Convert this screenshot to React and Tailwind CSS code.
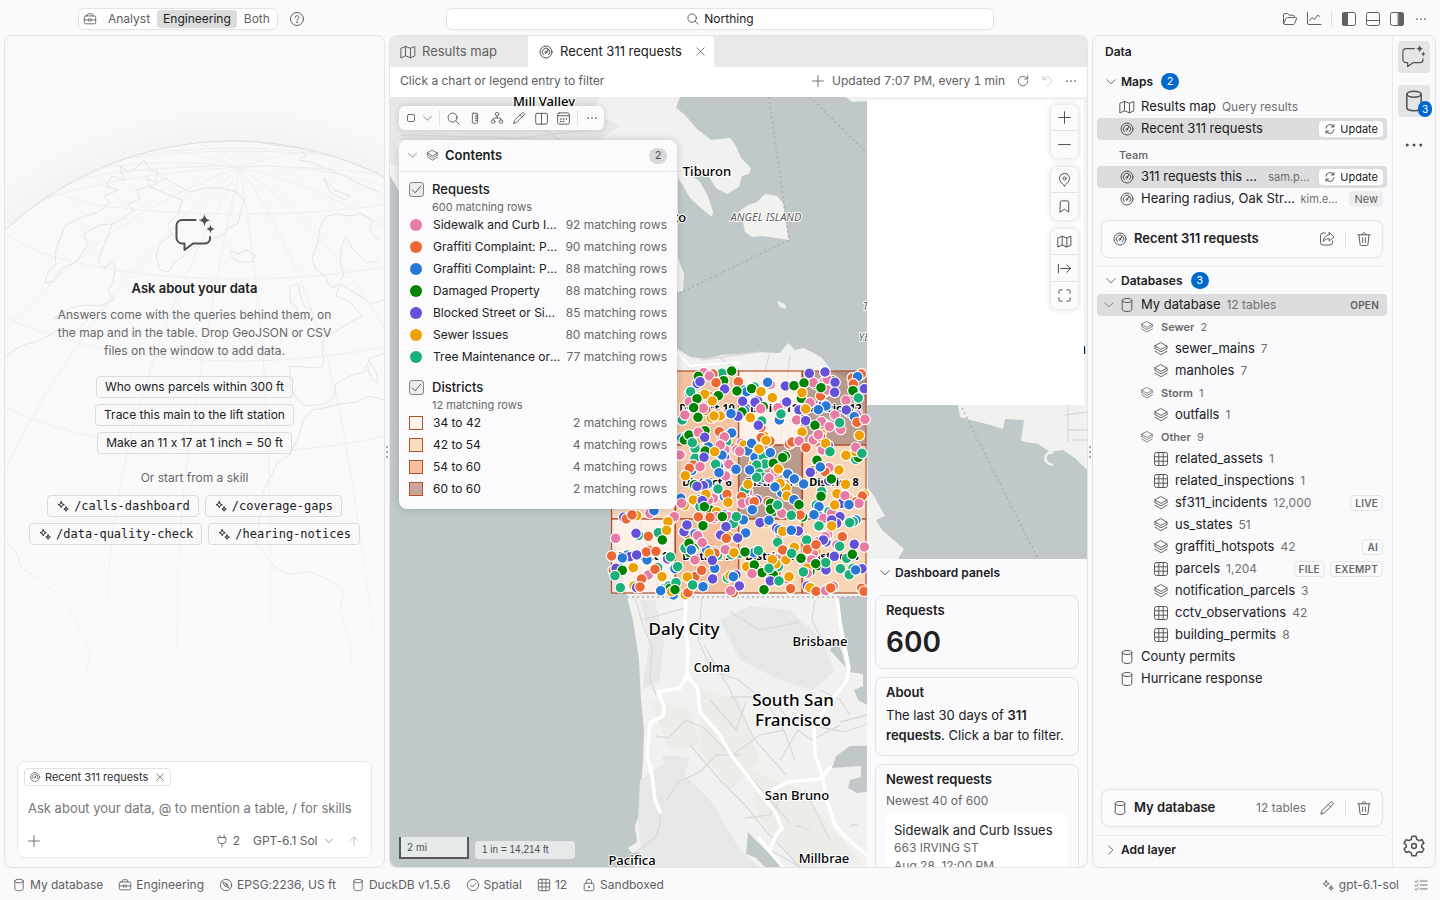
import React from "react";

const ICONS = {
  briefcase: (
    <>
      <rect x="1.5" y="4.5" width="13" height="9" rx="1.5" />
      <path d="M5 4.5V3a1 1 0 0 1 1-1h4a1 1 0 0 1 1 1v1.500M1.500 9H6.500M9.500 9h5M6.500 8h3v2.200h-3z" />
    </>
  ),
  help: (
    <>
      <circle cx="8" cy="8" r="6.500" />
      <path d="M6.200 6.400A1.800 1.800 0 1 1 8.900 8c-.6.400-.9.700-.9 1.400" />
      <circle cx="8" cy="11.300" r=".4" fill="currentColor" />
    </>
  ),
  search: (
    <>
      <circle cx="7" cy="7" r="4.800" />
      <path d="m10.500 10.500 3.500 3.500" />
    </>
  ),
  folder: <path d="M1.500 12V4a1.500 1.500 0 0 1 1.500-1.500h2.600L7.200 4.200H11A1.500 1.500 0 0 1 12.500 5.700V6.500M1.700 12.300 4 7.300a1.400 1.400 0 0 1 1.300-.8H13.600a1 1 0 0 1 .9 1.400L12.600 12.500a1.500 1.500 0 0 1-1.400 1H3A1.500 1.500 0 0 1 1.500 12" />,
  chart: <path d="M1.500 1.500V12A1.500 1.500 0 0 0 3 13.500H15M3.500 9.500 6 6.500 8.500 8.500 12 4l1.500 1.500" />,
  sideLeft: (
    <>
      <rect x="1.500" y="1.500" width="13" height="13" rx="2" />
      <path d="M2 2h4.500v12H2z" fill="currentColor" />
    </>
  ),
  panelBottom: (
    <>
      <rect x="1.500" y="1.500" width="13" height="13" rx="2" />
      <path d="M1.500 9.500h13" />
    </>
  ),
  sideRight: (
    <>
      <rect x="1.500" y="1.500" width="13" height="13" rx="2" />
      <path d="M9.500 2H14v12H9.500z" fill="currentColor" />
    </>
  ),
  dots: (
    <g fill="currentColor" stroke="none">
      <circle cx="3.500" cy="8" r="1" />
      <circle cx="8" cy="8" r="1" />
      <circle cx="12.500" cy="8" r="1" />
    </g>
  ),
  map: <path d="M1.200 4.200 5.500 2.400v9.400L1.200 13.800zM5.500 2.400l5 1.900v9.500l-5-2M10.500 4.300l4.300-1.900v9.500l-4.300 1.900" />,
  gauge: (
    <>
      <circle cx="8" cy="8" r="6" />
      <path d="M5.300 10.700A3.800 3.800 0 1 1 10.700 10.700" />
      <circle cx="7.800" cy="8.500" r=".9" />
      <path d="m8.400 7.800 1.700-2.100" strokeWidth="1.200" />
    </>
  ),
  close: <path d="m3.500 3.500 9 9M12.500 3.500l-9 9" />,
  plus: <path d="M8 1.800v12.400M1.800 8h12.400" />,
  minus: <path d="M1.800 8h12.400" />,
  refresh: <path d="M13.500 8A5.500 5.500 0 1 1 11.700 4L13.500 5.700M13.500 2v3.700H9.800" />,
  undo: <path d="M3.500 2.500v4h4M3.500 6.500C6 3.500 8.500 3 10.500 3.900c2.800 1.300 3.400 4.700 1.400 6.700L8 14" />,
  sync: <path d="M2.500 7A5.600 5.600 0 0 1 13 5M13.300 2v3.300H10M13.500 9A5.600 5.600 0 0 1 3 11M2.700 14v-3.300H6" />,
  square: <rect x="4" y="4" width="8" height="8" rx="1.500" />,
  down: <path d="m2.500 5 5.500 5.500L13.500 5" />,
  right: <path d="m5 2.500 5.500 5.500L5 13.500" />,
  ruler: (
    <>
      <rect x="5" y="2.500" width="6" height="11.500" rx="1" />
      <path d="M8.500 4.800h2.500M8.500 6.800h2.500M8.500 8.800h2.500M8.500 10.800h2.500" />
    </>
  ),
  tree: (
    <>
      <circle cx="8" cy="3.600" r="2" />
      <circle cx="3.600" cy="12" r="2" />
      <circle cx="12.400" cy="12" r="2" />
      <path d="M8 5.600V8M3.600 10V9a1 1 0 0 1 1-1h6.800a1 1 0 0 1 1 1v1" />
    </>
  ),
  pencil: <path d="M10.500 3.300 11.700 2.100a1.700 1.700 0 0 1 2.300 2.300L5.300 13 1.800 14.200 3 10.700zM9.300 4.500l2.400 2.400" />,
  split: (
    <>
      <rect x="1.800" y="2.500" width="12.500" height="11.500" rx="1.500" />
      <path d="M8 2.500V14" />
    </>
  ),
  calendar: (
    <>
      <rect x="1.800" y="2" width="12.500" height="12" rx="2" />
      <path d="M1.800 5h12.500" />
      <path d="M5 8.500h.4M7.900 8.500h.4M10.800 8.500h.4M5 11.200h.4M7.900 11.200h.4" strokeWidth="1.500" />
    </>
  ),
  layers: <path d="M8 1.800 14 5 8 8.400 2 5zM2 7.500l6 3.300 6-3.300M2 10.200l6 3.500 6-3.500M2 5v2.500M14 5v2.500" strokeWidth=".9" />,
  database: (
    <>
      <ellipse cx="8" cy="3.500" rx="4.800" ry="2" />
      <path d="M3.200 3.500v9c0 1.100 2.100 2 4.800 2s4.800-.9 4.800-2v-9" />
    </>
  ),
  grid: (
    <>
      <rect x="1.500" y="1.500" width="13" height="13" rx="2" />
      <path d="M1.500 5.800h13M1.500 10.200h13M5.800 1.500v13M10.200 1.500v13" />
    </>
  ),
  pin: (
    <>
      <path d="M8 14.800C5 12 2.700 9.700 2.700 6.800a5.300 5.300 0 0 1 10.600 0C13.300 9.700 11 12 8 14.800z" />
      <circle cx="8" cy="6.800" r="1.600" />
    </>
  ),
  bookmark: <path d="M3.500 3.500A1.500 1.500 0 0 1 5 2h6a1.500 1.500 0 0 1 1.500 1.500V14L8 10.800 3.500 14z" />,
  toRight: <path d="M1.500 3.500v9M4 8h10.500M10.500 4l4 4-4 4" />,
  expand: <path d="M2 5.500V3.500A1.500 1.500 0 0 1 3.500 2H5.500M10.500 2h2A1.500 1.500 0 0 1 14 3.500v2M14 10.500v2a1.500 1.500 0 0 1-1.500 1.500h-2M5.500 14h-2A1.500 1.500 0 0 1 2 12.500v-2" />,
  share: <path d="M6.500 2H4A2.500 2.500 0 0 0 1.500 4.500v7A2.500 2.500 0 0 0 4 14h7a2.500 2.500 0 0 0 2.500-2.500V10M10.200 1.500 15 5.800 10.200 10V7.700C7.500 7.600 5.700 8.400 4.300 10.500 4.500 6.800 6.500 4 10.200 3.800z" />,
  trash: <path d="M1.800 3.800h12.400M5.800 3.800C5.800 1 10.200 1 10.200 3.800M3 3.800l1 9.400a1.400 1.400 0 0 0 1.400 1.300h5.200a1.400 1.400 0 0 0 1.400-1.300l1-9.400M6.600 6.800v4.700M9.400 6.800v4.700" />,
  sparkles: <path d="M6 3 7 5.500 9.500 6.500 7 7.500 6 10 5 7.500 2.500 6.500 5 5.500zM11.500 9l.7 1.800 1.800.7-1.800.7-.7 1.800-.7-1.800-1.800-.7 1.800-.7z" strokeWidth="1.100" />,
  plug: <path d="M5.500 1.500V4M10.500 1.500V4M3.500 4h9v3.500A3.500 3.500 0 0 1 9 11H7A3.500 3.500 0 0 1 3.500 7.500zM8 11v4" />,
  up: <path d="M8 14V2.500M3 7.500l5-5 5 5" />,
  compass: (
    <>
      <circle cx="8" cy="8" r="6.500" />
      <path d="m4.800 4.800 4.400 1.900 2 4.500-4.400-2z" />
      <circle cx="8" cy="8" r=".4" />
    </>
  ),
  check: (
    <>
      <circle cx="8" cy="8" r="6.500" />
      <path d="m5 8.200 2.200 2.200 4-4.400" />
    </>
  ),
  lock: (
    <>
      <rect x="2.500" y="6" width="11" height="8.500" rx="1.500" />
      <path d="M5 6V4.300a3 3 0 0 1 6 0V6" />
      <circle cx="8" cy="10.300" r=".6" fill="currentColor" />
    </>
  ),
  list: <path d="M7 3.500h8M7 8h8M7 12.500h8M1.200 3.700l1.300 1.300 2.300-2.700M1.200 8.200l1.300 1.300 2.300-2.700M1.200 12.700 2.500 14l2.300-2.700" />,
  gear: (
    <>
      <path d="M6.700 1.500h2.600l.5 2 1.500.9 2-.6 1.300 2.300-1.500 1.400v1.100l1.500 1.400-1.300 2.300-2-.6-1.500.9-.5 1.900H6.700l-.5-1.900-1.500-.9-2 .6L1.400 10l1.500-1.400V7.500L1.400 6.100l1.300-2.300 2 .6 1.500-.9z" />
      <circle cx="8" cy="8" r="1.600" />
    </>
  ),
};

function Icon({ name, className = "size-4" }) {
  return (
    <svg viewBox="0 0 16 16" fill="none" stroke="currentColor" strokeLinecap="round" strokeLinejoin="round" className={`shrink-0 ${className}`} aria-hidden="true">
      {ICONS[name]}
    </svg>
  );
}

function ChatIcon({ className }) {
  return (
    <svg viewBox="0 0 40 40" fill="none" stroke="currentColor" strokeWidth="2" strokeLinecap="round" strokeLinejoin="round" className={`shrink-0 ${className}`} aria-hidden="true">
      <path d="M20.500 6H7A5.500 5.500 0 0 0 1.500 11.500V24A5.500 5.500 0 0 0 7 29.500H9.500V36L18 29.500H30A5 5 0 0 0 35 24.500V23" />
      <path d="M29.500 0C30.300 4 31.500 5.300 35.500 6.200 31.500 7 30.300 8.300 29.500 12.300 28.700 8.300 27.500 7 23.500 6.200 27.500 5.300 28.700 4 29.500 0z" fill="currentColor" stroke="none" />
      <path d="M35.500 10.500C36.100 13.500 37 14.400 40 15 37 15.600 36.100 16.500 35.500 19.500 34.900 16.500 34 15.600 31 15 34 14.400 34.900 13.500 35.500 10.500z" fill="currentColor" stroke="none" />
    </svg>
  );
}

function IconButton({ label, name, className = "size-6", iconClass = "size-4" }) {
  return (
    <button type="button" aria-label={label} className={`flex shrink-0 items-center justify-center ${className}`}>
      <Icon name={name} className={iconClass} />
    </button>
  );
}

/* ---------- Header ---------- */

function Header() {
  return (
    <header className="grid h-[35px] shrink-0 grid-cols-[1fr_minmax(0,548px)_1fr] items-center pt-[3px] text-[#606060]">
      <div className="flex items-center gap-2 pl-[78px]">
        <div role="group" aria-label="Mode" className="flex h-[22px] items-center rounded-md border border-[#e4e4e6] bg-white text-xs">
          <span className="flex w-[22px] justify-center">
            <Icon name="briefcase" className="size-[14px]" />
          </span>
          <button type="button" className="px-[7px]">Analyst</button>
          <button type="button" aria-pressed="true" className="h-[18px] rounded bg-[#dcdcdd] px-[6px] text-[#202020]">Engineering</button>
          <button type="button" className="px-[7px]">Both</button>
        </div>
        <IconButton label="Help" name="help" className="size-[22px]" />
      </div>
      <button type="button" className="flex h-[22px] items-center justify-center gap-1 rounded-md border border-[#e4e4e6] bg-white text-xs text-[#202020]">
        <Icon name="search" className="size-[14px] text-[#505050]" />
        Northing
      </button>
      <div className="flex items-center justify-end pr-[7px]">
        <IconButton label="Open" name="folder" />
        <IconButton label="Charts" name="chart" />
        <span className="mx-[5px] h-4 w-px bg-[#e0e0e2]" />
        <IconButton label="Toggle left side bar" name="sideLeft" />
        <IconButton label="Toggle panel" name="panelBottom" />
        <IconButton label="Toggle right side bar" name="sideRight" />
        <IconButton label="More" name="dots" iconClass="size-[14px]" />
      </div>
    </header>
  );
}

/* ---------- Chat panel ---------- */

const COASTS = [
  "M66 225 60 238 55 253 56 265 48 272 45 283 54 281 62 268 76 262 88 245 83 234 100 225 112 224 124 218 134 210 128 204 140 199 136 190 150 186 146 178 155 182 158 172 150 170 144 160 136 168 128 172 120 166 124 180 112 176 106 186 118 190 104 196 110 203 98 212 80 218z",
  "M112 224 106 240 98 262 104 268 112 262 116 268 112 284 108 290 114 300 100 306 86 305 70 308 54 318 66 318 82 312 88 320 74 332 60 328 48 336 36 342 26 344 14 350 5 356",
  "M150 187 165 178 178 186 190 192 206 188 222 188 236 192 244 200 240 214 238 224 228 228 224 234 210 240 195 246 186 254 176 262 168 272 160 270 156 256 160 244 172 234 168 224 178 214 182 200z",
  "M230 250 238 254 246 250 256 256 252 262 240 262 232 258z",
  "M255 142 270 144 280 146 300 148 306 156 298 160 310 162 330 170 345 176 360 184 378 192",
  "M324 178 334 190 350 196 344 200 330 192z",
  "M378 240 370 232 372 220 362 214 350 216 338 214 326 216 320 228 318 242 312 258 316 270 326 276 328 284 334 288 344 276 340 262 342 244 346 236 352 248 360 256 366 262 378 262",
  "M290 286 298 284 300 294 304 306 312 310 306 320 294 318 298 308 290 302z",
  "M384 300 372 304 360 296 350 290 340 284 336 296 350 302 362 316 350 322 338 330 324 336 322 350 324 364 318 368 290 366 290 386 296 398 304 406 324 404 334 398 336 384 350 376 364 372 370 358 384 354",
  "M384 400 370 396 356 402 340 404 324 408 312 410 304 418 298 438 290 454 278 462 270 478 262 494 262 510 258 526 256 544 266 556 274 566 286 574 310 572 330 580 344 590 340 610 350 640 352 668",
  "M5 540 16 552 22 568 40 580 56 594 70 610 82 634 90 652 86 676 76 700",
  "M370 362 376 372 378 382 372 380 368 370z",
];

function Globe() {
  return (
    <svg viewBox="5 36 379 831" preserveAspectRatio="xMidYMin slice" className="absolute inset-0 h-full w-full" fill="none" aria-hidden="true">
      <defs>
        <linearGradient id="sphere" x1="0" y1="0" x2="0" y2="1">
          <stop offset="0" stopColor="#f8f8f9" />
          <stop offset=".75" stopColor="#fafafb" />
          <stop offset="1" stopColor="#fafafd" />
        </linearGradient>
        <linearGradient id="fade" x1="0" y1="0" x2="0" y2="1">
          <stop offset="0" stopColor="#fff" />
          <stop offset=".5" stopColor="#fff" />
          <stop offset=".85" stopColor="#000" />
        </linearGradient>
        <mask id="fademask">
          <rect x="0" y="36" width="400" height="831" fill="url(#fade)" />
        </mask>
        <radialGradient id="halo" gradientUnits="userSpaceOnUse" cx="233" cy="477" r="380">
          <stop offset=".88" stopColor="#f4f4f6" />
          <stop offset="1" stopColor="#fafafd" />
        </radialGradient>
        <clipPath id="disc">
          <circle cx="233" cy="477" r="336" />
        </clipPath>
      </defs>
      <circle cx="233" cy="477" r="380" fill="url(#halo)" mask="url(#fademask)" />
      <circle cx="233" cy="477" r="336" fill="url(#sphere)" />
      <g mask="url(#fademask)">
        <circle cx="233" cy="477" r="336" stroke="#dcdcde" />
        <g stroke="#eeeef0" clipPath="url(#disc)">
          <ellipse cx="240" cy="190" rx="180" ry="24" />
          <ellipse cx="240" cy="215" rx="245" ry="64" />
          <ellipse cx="240" cy="245" rx="300" ry="116" />
          <ellipse cx="238" cy="300" rx="330" ry="152" />
          <path d="M240 167Q60 230-60 420M240 167Q20 180-80 260M240 167Q110 270 20 440T-10 700M240 167Q165 300 130 440T110 760M240 167Q210 300 190 440T180 760M240 167Q262 300 268 440T266 760M240 167Q318 280 345 440T380 700M240 167Q360 250 430 420M240 167Q380 200 470 300M240 167Q340 160 440 210M240 167Q100 150 0 200M240 167Q170 145 140 150M240 167Q225 150 200 144M240 167Q250 150 262 143M240 167Q300 148 330 152" />
        </g>
        <g stroke="#e4e4e6" strokeLinejoin="round" clipPath="url(#disc)">
          {COASTS.map((d) => (
            <path key={d} d={d} />
          ))}
        </g>
      </g>
    </svg>
  );
}

const PROMPTS = ["Who owns parcels within 300 ft", "Trace this main to the lift station", "Make an 11 x 17 at 1 inch = 50 ft"];
const SKILLS = ["/calls-dashboard", "/coverage-gaps", "/data-quality-check", "/hearing-notices"];

function ChatPanel() {
  return (
    <section className="relative flex w-[381px] shrink-0 flex-col overflow-hidden rounded-lg border border-[#e4e4e7]">
      <Globe />
      <div className="relative flex flex-1 flex-col items-center justify-center px-3 pb-[38px]">
        <ChatIcon className="size-10 text-[#505050]" />
        <h2 className="mt-6 text-[13px] leading-5 font-semibold">Ask about your data</h2>
        <p className="mt-2 w-[280px] text-center text-xs leading-[18px] text-[#686868]">Answers come with the queries behind them, on the map and in the table. Drop GeoJSON or CSV files on the window to add data.</p>
        <div className="mt-4 flex flex-col items-center gap-1.5">
          {PROMPTS.map((p) => (
            <button key={p} type="button" className="h-[22px] rounded border border-[#dcdcde] px-2 text-xs">{p}</button>
          ))}
        </div>
        <p className="mt-[15px] text-xs leading-[18px] text-[#686868]">Or start from a skill</p>
        <div className="mt-2 flex flex-wrap justify-center gap-1.5">
          {SKILLS.map((s) => (
            <button key={s} type="button" className="flex h-[22px] items-center gap-1 rounded border border-[#dcdcde] px-2 font-['DejaVu_Sans_Mono',monospace] text-xs">
              <Icon name="sparkles" className="size-[14px]" />
              {s}
            </button>
          ))}
        </div>
      </div>
      <form className="relative mx-3 mb-[9px] rounded-lg border border-[#e8e8ea] bg-white px-1.5 pt-1.5" onSubmit={(e) => e.preventDefault()}>
        <span className="flex h-[18px] w-fit items-center gap-1 rounded border border-[#e2e2e4] px-1 text-[11px] text-[#303030]">
          <Icon name="gauge" className="size-3 text-[#606060]" />
          Recent 311 requests
          <button type="button" aria-label="Remove context" className="ml-0.5 text-[#606060]">
            <Icon name="close" className="size-3" />
          </button>
        </span>
        <input aria-label="Ask" placeholder="Ask about your data, @ to mention a table, / for skills" className="mt-3 block h-5 w-full px-1 text-[13px] outline-none placeholder:text-[#767676]" />
        <div className="mt-[11px] flex h-7 items-center pb-1 text-xs text-[#606060]">
          <IconButton label="Add" name="plus" className="size-5" iconClass="size-[14px]" />
          <button type="button" className="ml-auto flex items-center gap-1">
            <Icon name="plug" className="size-[14px]" />2
          </button>
          <span className="relative ml-[13px] flex items-center">
            <select aria-label="Model" className="appearance-none bg-transparent pr-4">
              <option>GPT-6.1 Sol</option>
            </select>
            <Icon name="down" className="pointer-events-none absolute right-0 size-[10px]" />
          </span>
          <button type="submit" aria-label="Send" className="mr-px ml-[10px] flex size-5 items-center justify-center text-[#b0b0b2]">
            <Icon name="up" className="size-[12px]" />
          </button>
        </div>
      </form>
    </section>
  );
}

/* ---------- Map ---------- */

const DOT_COLORS = { p: "#e87ba4", o: "#eb6834", b: "#2a78d6", g: "#008300", v: "#6452d6", y: "#eda100", t: "#1baf7a" };

const DOTS = `t366,100 p311,98 o339,102 g295,109 p328,108 o784,102 p682,118 o757,114 v556,138 p640,128 g371,122 v374,147 b440,155 t268,160 o326,168 p300,170 t345,175 o662,168 p682,150 g604,175
p268,185 p310,205 p534,203 b538,240 b678,198 v597,210 o357,222 y360,228 t247,240 p705,225 o668,252 p590,240 t485,243 p664,245 g315,272 y305,295 g253,300 t380,305 o510,303 o484,293 p640,300 o662,290
b325,320 t285,325 p375,330 b366,345 p240,345 t285,355 y432,315 b443,333 b465,352 t490,350 t495,372 p667,330 g775,352 y766,334 o280,375 o268,385 p387,373 p377,408 t470,375 g520,370 t478,400 p527,395 p687,383 o675,395 t490,412 t470,412
b323,432 t435,450 o548,440 b545,458 y558,445 t665,455 y540,430 o425,470 p340,475 p325,480 b295,480 y280,480 b242,475 p245,490 p427,490 p450,485 g512,490 y793,463 v725,490 t300,500 g330,510 y350,515 p350,530 p385,530 p545,520 o600,525 b660,530 p670,535 p695,520 v720,530 v710,550 t760,545
y110,527 p150,520 b162,512 t400,550 b430,540 v252,575 t175,578 v595,573 b538,570 t657,558 v362,585 p675,590 p655,605 t255,625 p277,632 b320,630 p345,635 o345,640 t418,640 b462,638 v90,650 p548,648 y583,622 p640,640 t740,655 b141,660 v48,685 p285,660 y558,660 p635,660 t535,680 y528,672 p475,690 b344,685 y622,685 p622,700 v678,690 v786,686 y390,708 o285,710 p145,705 t207,738 g210,745 b220,765 v110,743 v418,738 o785,745 g520,705 y215,755
g395,93 v300,125 o348,128 o415,125 b503,127 v628,100 v675,96 b773,110 g582,137 g612,129 v705,127 o760,132 g411,153 g455,146 y483,155 t272,155 y314,163 g355,167 y606,158 g663,143 v704,157 g759,152 v793,146 t775,174 y517,173 y337,183 g291,176
v428,184 v465,187 g490,200 p482,206 v560,186 p630,188 p738,181 v739,210 b655,209 y617,207 g281,203 p255,225 t543,222 g426,216 v414,229 b393,221 y342,228 g294,232 y451,233 v475,256 v617,242 g645,256 p688,260 p722,268 t719,248 b763,230 o771,247 p795,238
g267,285 p295,277 v314,292 t277,308 o358,275 b395,279 p373,291 p361,315 y606,276 p655,284 y778,286 y498,301 o576,306 p597,303 o618,323 y677,310 p767,322 b455,310 p419,334 y477,327 b511,338 g548,353 g316,333 y344,335 v312,352 t690,335 y738,346 t786,340 g651,361
p300,380 t347,373 y256,407 b357,398 b408,388 b449,390 y535,387 v631,397 b661,381 y717,390 g694,417 p507,414 b563,402 b583,417 b611,432 v310,437 v291,439 t354,447 y444,433 b525,441 y737,433 y318,463 o381,463 g663,469 y711,461 p735,467 y561,468 o787,468 p777,490 b747,494 y704,495 o463,485 b582,479 g597,494
v307,482 y384,487 g313,500 g512,508 t533,495 b457,509 b657,500 o295,531 o330,532 g367,530 t409,530 v480,548 b507,541 t574,526 b642,524 v695,540 y695,558 t749,548 o79,537 o96,525 p223,530 y204,545 v261,555 g309,557 y200,571 g187,600 o145,589 v108,580 p47,595 v378,560
p293,587 g267,610 p307,608 o379,595 b437,579 v413,594 y548,574 b574,571 o727,590 v670,600 t620,600 t533,607 t719,619 v763,613 p793,621 b274,630 y328,640 p376,629 y402,638 g435,636 t475,632 o548,630 t575,640 o622,628 o648,614 o35,648 b67,654 o139,636 o168,634 v110,645 t211,651 v703,649 g757,643 g603,655 y517,659 v337,661
g67,691 y100,683 t45,707 o165,688 o125,717 y186,710 t233,680 o305,691 v338,717 y262,711 y440,680 g463,675 g486,698 p456,701 t507,685 b400,710 v511,723 t537,723 y567,710 t610,696 t677,668 g647,671 t721,686 t748,704 b767,690
t61,743 o120,741 b182,752 t228,728 g225,749 o264,758 t278,735 b309,740 p392,752 g492,749 o572,746 y630,743 o648,754 p677,752 o692,744 o792,754`
  .split(/\s+/)
  .map((s) => {
    const [x, y] = s.slice(1).split(",").map(Number);
    return { x, y, fill: DOT_COLORS[s[0]] };
  });

const PALETTE = Object.values(DOT_COLORS);
const DUPLICATES = DOTS.filter((d, i) => i % 3 === 0 && d.x < 780 && d.y > 110).map((d, i) => ({
  x: d.x + (i % 2 ? 8 : -8),
  y: d.y + (i % 4 < 2 ? 6 : -5),
  fill: PALETTE[(i * 3) % 7],
}));

const DISTRICTS = [
  [611, 371, "#f5b78e"], [675, 371, "#f3ab7c"], [738, 371, "#fff0e4"], [802, 371, "#a07060"],
  [611, 445, "#f8cda9"], [675, 445, "#f5b78e"], [738, 445, "#a07060"], [802, 445, "#f9c89c"],
  [611, 519, "#fff0e4"], [675, 519, "#f3a574"], [738, 519, "#f9c89c"], [802, 519, "#f9c89c"],
];

const DISTRICT_LABELS = [
  ["District 10", 707, 412], ["District 11", 770, 412], ["District 12", 834, 412],
  ["District 6", 707, 486], ["District 7", 770, 486], ["District 8", 834, 486],
  ["District 1", 643, 560], ["District 2", 707, 560], ["District 3", 770, 560], ["District 4", 834, 560],
];

const PLACES = [
  ["Mill Valley", 544, 106, 13], ["Tiburon", 707, 176, 13], ["Sausalito", 658, 222, 13],
  ["Daly City", 684, 635, 17], ["Brisbane", 820, 646, 13], ["Colma", 712, 672, 12],
  ["South San", 793, 706, 17], ["Francisco", 793, 726, 17], ["San Bruno", 797, 800, 13],
  ["Pacifica", 632, 865, 13], ["Millbrae", 824, 863, 13], ["Oakland", 1063, 354, 17],
];

function BaseMap() {
  return (
    <svg viewBox="390 97 697 770" preserveAspectRatio="xMinYMin slice" className="absolute inset-0 h-full w-full" role="img" aria-label="Map of San Francisco requests by district">
      <rect x="390" y="97" width="1400" height="1400" fill="#c1c8ca" />
      <g fill="#f1f2f0">
        <path d="M390 97H680L676 108 684 114 697 129 711 140 730 138 736 146 741 158 751 168 749 174 742 176 739 187 727 194 716 188 709 177 702 172 690 174 700 182 708 196 713 212 712 217 702 209 690 198 682 184 678 178V258L684 274 683 291 676 292 600 300 480 290 420 230 390 175z" />
        <path d="M748 205 757 202 765 194 777 196 783 203 786 222 789 240 776 238 762 236 752 237 745 232 743 222 737 213z" />
        <path d="M777 301 785 304 786 309 780 307z" />
        <path d="M846 97H870V101L852 102z" />
        <path d="M610 371 640 360 678 349 690 357 705 359 722 355 740 354 758 352 780 353 788 343 795 350 803 348 812 352 822 358 832 371 850 380 866 400 868 488 874 496 885 516 876 520 882 530 904 549 898 559 890 559 870 575 866 596 838 597 840 625 846 650 849 672 863 674V686L854 690 858 700 867 705 900 720V745L850 746 836 756 832 768 861 766V777L850 780 848 788 857 793 900 788V870H633L640 852 632 853 628 848 637 842 635 826 639 815 641 790 643 760 644 730 641 700 639 660 633 620 627 597 614 540z" />
        <path d="M867 97H1087V470L1075 458 1063 450 1050 452 1038 444 1021 441 1024 420 1005 419 1003 429 990 425 960 417 958 405H867z" />
      </g>
      <g fill="#e5e8e5">
        <path d="M390 97H600L590 112 620 125 600 140H390zM399 165H390V97z" />
        <path d="M720 620 750 606 790 610 822 640 834 672 812 690 780 680 740 660z" />
        <path d="M640 780 670 760 710 800 740 850 760 867H634L641 850 638 820z" />
        <path d="M662 755 690 758 684 775 668 780z" />
        <path d="M640 600 650 640 642 690 660 680 664 640 655 600z" />
      </g>
      <g fill="#ecece8">
        <path d="M700 690 740 700 760 760 730 790 700 750zM750 770 800 790 860 860 800 867 760 820z" />
        <path d="M650 700 690 710 700 745 670 750z" />
      </g>
      <path d="M830 650 846 668 842 652 836 640z" fill="#c1c8ca" />
      <path d="M748 832 782 867H765L756 858 746 854z" fill="#c1c8ca" />
      <path d="M1053 453C1044 450 1042 464 1053 465" fill="none" stroke="#f1f2f0" strokeWidth="2.500" />
      <g fill="none" stroke="#dbd9da" strokeWidth="1.300">
        <path d="M635 597 642 622 652 648 650 680 656 695M642 620 684 608M702 597 698 640 712 670 738 680 764 700M704 645 730 690 745 720 755 740 786 775M765 700 784 730 795 760M656 736 668 738 686 720 704 728 740 765 790 823M667 800 678 782 700 772 716 755 740 755M690 745 720 780 745 805 765 830 800 867M784 730 760 735 735 753M746 702 736 730 710 700M815 600 812 620 822 640M730 612 760 630 800 622M780 760 798 730 812 740 840 725M820 727 844 732 867 724M805 790 830 840M850 826 858 824M745 818 770 815 780 800M634 853 655 838 660 826 659 810M820 690 840 700 850 715M810 830 795 825M840 722 867 715M730 697 768 697 790 720M800 867 770 850" />
        <path d="M1068 405V442M1068 430H1087M1072 440H1087M1065 415 1087 412" />
        <path d="M700 360 760 352M720 358 740 371M770 352 765 371M790 355 780 445M755 371 770 445M611 540 640 570 630 593M640 519 660 593M690 519 730 560 700 593M750 560 790 540 802 593M810 519 850 560M400 135 520 138 590 130M560 140 545 130" />
      </g>
      <g fill="none" stroke="#fff" strokeWidth="3.500" strokeLinejoin="round" strokeLinecap="round">
        <path d="M686 597 685 620 688 652 687 676 680 688 658 692 664 706 663 716 650 723 649 735 647 755 652 775 655 800 660 812" />
        <path d="M688 676 698 690 700 712 720 735 731 755 747 775 762 795 775 812 782 828 776 835 770 850" />
        <path d="M837 597 840 622 849 668 846 682 828 705 814 725 815 755 822 775 827 800 835 825 846 838 867 855" />
        <path d="M767 793 788 782 820 779 830 768" />
        <path d="M678 353 690 366 740 362 725 371" strokeWidth="2" />
        <path d="M759 838 785 870" strokeWidth="3" />
      </g>
      <g fill="none" stroke="#aeaeae" strokeWidth="1.500" strokeDasharray="2 3">
        <path d="M769 97 789 240 680 293M810 97 869 155M962 408 1038 559" />
        <path d="M627 597H866" />
      </g>
      <g stroke="#b0532d" strokeWidth="1.200">
        {DISTRICTS.map(([x, y, fill]) => (
          <rect key={`${x}-${y}`} x={x + 0.5} y={y} width="63.500" height="74" fill={fill} fillOpacity=".68" />
        ))}
      </g>
      <g fontFamily="'Noto Sans', sans-serif" textAnchor="middle" stroke="#fff" strokeWidth="2" paintOrder="stroke" strokeLinejoin="round">
        <g fontSize="11" fontWeight="700">
          {DISTRICT_LABELS.map(([name, x, y]) => (
            <text key={name} x={x} y={y}>{name}</text>
          ))}
        </g>
        <g fontWeight="500">
          {PLACES.map(([name, x, y, size]) => (
            <text key={name} x={x} y={y} fontSize={size}>{name}</text>
          ))}
        </g>
        <g fontStyle="italic" fontSize="11" fill="#606060">
          <text x="766" y="221">ANGEL ISLAND</text>
          <text x="887" y="310">TREASURE</text>
          <text x="892" y="341">YERBA BUENA</text>
        </g>
      </g>
      <g transform="translate(600 340) scale(.3333)" stroke="#fff" strokeWidth="3.500">
        {[...DUPLICATES, ...DOTS].map((d, i) => (
          <circle key={i} cx={d.x} cy={d.y} r="16" fill={d.fill} />
        ))}
      </g>
    </svg>
  );
}

function MapToolbar() {
  return (
    <div role="toolbar" aria-label="Map tools" className="flex h-6 w-fit items-center rounded-md bg-[#fbfbfd] px-px text-[#585858] shadow-[0_0_6px_rgba(0,0,0,0.15)]">
      <IconButton label="Select" name="square" className="h-[22px] w-[22px]" iconClass="size-[14px]" />
      <IconButton label="Selection modes" name="down" className="mr-1 h-[22px] w-[11px]" iconClass="size-[11px]" />
      <span className="mx-0.5 h-4 w-px bg-[#e0e0e2]" />
      <IconButton label="Search" name="search" className="size-[22px]" iconClass="size-[15px]" />
      <IconButton label="Measure" name="ruler" className="size-[22px]" iconClass="size-[14px]" />
      <IconButton label="Trace" name="tree" className="size-[22px]" iconClass="size-[14px]" />
      <IconButton label="Draw" name="pencil" className="size-[22px]" iconClass="size-[14px]" />
      <IconButton label="Compare" name="split" className="size-[22px]" iconClass="size-[15px]" />
      <IconButton label="Timeline" name="calendar" className="size-[22px]" iconClass="size-[15px]" />
      <span className="mx-[3px] h-4 w-px bg-[#e0e0e2]" />
      <IconButton label="More tools" name="dots" className="size-[22px]" iconClass="size-[14px]" />
    </div>
  );
}

const REQUEST_ROWS = [
  ["Sidewalk and Curb Issues", 92, "bg-[#e87ba4]"],
  ["Graffiti Complaint: Private Property", 90, "bg-[#eb6834]"],
  ["Graffiti Complaint: Public Property", 88, "bg-[#2a78d6]"],
  ["Damaged Property", 88, "bg-[#008300]"],
  ["Blocked Street or Sidewalk", 85, "bg-[#6452d6]"],
  ["Sewer Issues", 80, "bg-[#eda100]"],
  ["Tree Maintenance or Damage", 77, "bg-[#1baf7a]"],
];

const DISTRICT_ROWS = [
  ["34 to 42", 2, "bg-[#fff5ee]"],
  ["42 to 54", 4, "bg-[#fbdcbf]"],
  ["54 to 60", 4, "bg-[#f7bf9f]"],
  ["60 to 60", 2, "bg-[#c9a698]"],
];

function LegendGroup({ title, count, rows, square }) {
  return (
    <div>
      <label className="flex h-[19px] items-center gap-2">
        <span className="relative flex size-[15px] shrink-0">
          <input type="checkbox" defaultChecked className="size-[15px] appearance-none rounded-[3px] border border-[#858585] bg-[#ececee]" />
          <svg viewBox="0 0 16 16" className="pointer-events-none absolute inset-0 size-[15px] text-[#505050]" fill="none" stroke="currentColor" strokeLinecap="round" aria-hidden="true">
            <path d="m3.500 8.500 3 3 6-7" />
          </svg>
        </span>
        <span className="text-[13px] font-medium">{title}</span>
      </label>
      <p className="h-[15px] pl-[23px] text-[11px] leading-4 text-[#686868]">{count} matching rows</p>
      <ul>
        {rows.map(([name, n, color]) => (
          <li key={name + n}>
            <button type="button" className="flex h-[22px] w-full items-center text-left text-xs">
              <span className="flex w-6 shrink-0">
                <span className={`${square ? "size-[14px] border border-[#b0532d]" : "ml-px size-3 rounded-full"} ${color}`} />
              </span>
              <span className="min-w-0 flex-1 truncate">{name}</span>
              <span className="ml-1.5 shrink-0 text-[#686868]">{n} matching rows</span>
            </button>
          </li>
        ))}
      </ul>
    </div>
  );
}

function ContentsPanel() {
  return (
    <section className="w-[278px] rounded-lg bg-[#fbfbfd] shadow-[0_0_8px_rgba(0,0,0,0.18)]">
      <header className="flex h-8 items-center border-b border-[#e6e6e8] pr-[10px] pl-2">
        <Icon name="down" className="mr-2 size-[11px] text-[#606060]" />
        <Icon name="layers" className="mr-1.5 size-[13px] text-[#505050]" />
        <h3 className="text-[13px] font-semibold">Contents</h3>
        <span className="ml-auto flex h-4 w-[18px] items-center justify-center rounded-full bg-[#d9d9db] text-[11px] text-[#505050]">2</span>
      </header>
      <div className="flex flex-col gap-[10px] px-[10px] pt-2 pb-[9px]">
        <LegendGroup title="Requests" count={600} rows={REQUEST_ROWS} />
        <LegendGroup title="Districts" count={12} rows={DISTRICT_ROWS} square />
      </div>
    </section>
  );
}

function ControlGroup({ items }) {
  return (
    <div className="flex w-[27px] flex-col divide-y divide-[#e4e4e6] rounded-md bg-[#fbfbfd] text-[#484848] shadow-[0_0_6px_rgba(0,0,0,0.18)]">
      {items.map(([label, name]) => (
        <IconButton key={name} label={label} name={name} className="h-[26px] w-full not-first:h-[27px]" iconClass="size-[15px]" />
      ))}
    </div>
  );
}

function Card({ title, children, className = "" }) {
  return (
    <article className={`rounded-lg border border-[#e4e4e7] px-[10px] pt-1 ${className}`}>
      <h4 className="text-[13px] leading-5 font-semibold">{title}</h4>
      {children}
    </article>
  );
}

function Dashboard() {
  return (
    <section className="flex h-[40%] shrink-0 flex-col overflow-hidden bg-[#fafafd]">
      <button type="button" className="flex h-7 shrink-0 items-center gap-1 px-3 text-xs font-semibold">
        <Icon name="down" className="size-3" />
        Dashboard panels
      </button>
      <div className="mt-2 flex flex-col gap-2 px-2">
        <Card title="Requests" className="h-[74px]">
          <p className="mt-1 text-[28px] leading-9 font-semibold">600</p>
        </Card>
        <Card title="About" className="h-[79px]">
          <p className="mt-[3px] text-[13px] leading-5">
            The last 30 days of <strong className="font-semibold">311 requests</strong>. Click a bar to filter.
          </p>
        </Card>
        <Card title="Newest requests">
          <p className="mt-0.5 text-xs leading-5 text-[#686868]">Newest 40 of 600</p>
          <div className="mt-1 rounded bg-white px-2 py-1.5">
            <p className="text-[13px] leading-[18px]">Sidewalk and Curb Issues</p>
            <p className="text-xs leading-[18px] text-[#686868]">663 IRVING ST</p>
            <p className="text-xs leading-[18px] text-[#686868]">Aug 28, 12:00 PM</p>
          </div>
        </Card>
      </div>
    </section>
  );
}

function CenterPanel() {
  return (
    <main className="flex min-w-0 flex-1 flex-col overflow-hidden rounded-lg border border-[#e4e4e7] bg-white">
      <div role="tablist" className="flex h-[31px] shrink-0 bg-[#e9e9e9] text-[13px]">
        <button role="tab" type="button" className="flex w-[138px] items-center gap-1.5 px-[10px] text-[#606060]">
          <Icon name="map" />
          Results map
        </button>
        <div className="flex w-[186px] items-center rounded-tr bg-white pr-[7px] pl-[10px]">
          <button role="tab" type="button" aria-selected="true" className="flex items-center gap-1.5">
            <Icon name="gauge" className="size-4 text-[#505050]" />
            Recent 311 requests
          </button>
          <IconButton label="Close tab" name="close" className="ml-auto size-[14px] text-[#606060]" iconClass="size-[13px]" />
        </div>
      </div>
      <div className="flex h-[30px] shrink-0 items-center pr-1 pb-0.5 pl-[10px] text-xs text-[#606060]">
        <span>Click a chart or legend entry to filter</span>
        <IconButton label="Add panel" name="plus" className="ml-auto size-6" iconClass="size-[14px]" />
        <span className="mr-1.5 ml-0.5 tabular-nums">Updated 7:07 PM, every 1 min</span>
        <IconButton label="Refresh" name="refresh" iconClass="size-[14px]" />
        <IconButton label="Undo" name="undo" className="size-6 text-[#c4c4c6]" iconClass="size-[14px]" />
        <IconButton label="More actions" name="dots" iconClass="size-[14px]" />
      </div>
      <div className="relative flex min-h-0 flex-1 overflow-hidden">
        <BaseMap />
        <div className="relative flex flex-col gap-[10px] pt-[9px] pb-2 pl-[9px]">
          <MapToolbar />
          <ContentsPanel />
          <div className="mt-auto flex items-end gap-1.5 text-[#505050]">
            <span className="h-[22px] w-[70px] border-2 border-t-0 border-[#585858] bg-white/60 px-1.5 text-[10px] leading-5">2 mi</span>
            <span className="h-[18px] w-[100px] rounded bg-white/60 px-[7px] font-['Liberation_Sans',sans-serif] text-[10px] leading-[18px]">1 in = 14,214 ft</span>
          </div>
        </div>
        <div className="relative ml-auto flex w-[220px] shrink-0 flex-col">
          <div className="min-h-0 flex-1 pt-[3px] pr-[3px]">
            <div className="flex h-[305px] flex-col items-end gap-[9px] bg-white pt-[5px] pr-[6px]">
              <ControlGroup items={[["Zoom in", "plus"], ["Zoom out", "minus"]]} />
              <ControlGroup items={[["Locate", "pin"], ["Bookmarks", "bookmark"]]} />
              <ControlGroup items={[["Base map", "map"], ["Collapse", "toRight"], ["Full screen", "expand"]]} />
            </div>
          </div>
          <Dashboard />
        </div>
      </div>
    </main>
  );
}

/* ---------- Data panel ---------- */

function SectionTitle({ open = true, title, count }) {
  return (
    <button type="button" className="flex h-[27px] w-full items-center gap-1 pl-2 text-xs font-semibold">
      <Icon name={open ? "down" : "right"} className="size-3 text-[#404040]" />
      {title}
      {count && <span className="ml-1 flex h-[17px] w-[18px] items-center justify-center rounded-full bg-[#0069cc] text-[11px] font-normal text-white">{count}</span>}
    </button>
  );
}

function UpdateButton() {
  return (
    <button type="button" className="flex h-4 shrink-0 items-center gap-1 rounded bg-white px-[5px] text-[11px]">
      <Icon name="sync" className="size-3" />
      Update
    </button>
  );
}

function Row({ icon, name, sub, selected, indent = "pl-[22px]", children }) {
  return (
    <li className={`flex h-[22px] items-center gap-2 rounded pr-1 ${indent} ${selected ? "bg-[#dddddf]" : ""}`}>
      <Icon name={icon} className="-mr-0.5 size-4 text-[#585858]" />
      <span className="min-w-0 truncate text-[13px]">{name}</span>
      {sub && <span className="-ml-0.5 shrink-0 text-xs text-[#707070]">{sub}</span>}
      {children && <span className="ml-auto flex shrink-0 items-center gap-[5px]">{children}</span>}
    </li>
  );
}

function Tag({ children }) {
  return <span className="h-4 rounded border border-[#e6e6e8] px-1 text-[10px] leading-[14px] font-semibold tracking-wide text-[#686868]">{children}</span>;
}

function GroupRow({ name, count }) {
  return (
    <li className="flex h-[22px] items-center gap-[7px] pl-[43px] text-[11px] font-semibold text-[#686868]">
      <Icon name="layers" className="size-[14px]" />
      {name}
      <span className="-ml-px font-normal text-[#707070]">{count}</span>
    </li>
  );
}

const OTHER = [
  ["grid", "related_assets", "1", []],
  ["grid", "related_inspections", "1", []],
  ["layers", "sf311_incidents", "12,000", ["LIVE"]],
  ["layers", "us_states", "51", []],
  ["layers", "graffiti_hotspots", "42", ["AI"]],
  ["grid", "parcels", "1,204", ["FILE", "EXEMPT"]],
  ["layers", "notification_parcels", "3", []],
  ["grid", "cctv_observations", "42", []],
  ["grid", "building_permits", "8", []],
];

function DetailCard({ icon, title, note, action, actionLabel }) {
  return (
    <div className="mx-1 flex h-[38px] items-center rounded-lg border border-[#e4e4e6] bg-[#fbfbfd] pr-[7px] pl-[10px] shadow-[0_0_4px_rgba(0,0,0,0.05)]">
      <Icon name={icon} className="size-4 text-[#585858]" />
      <h3 className="ml-1.5 text-[13px] font-semibold">{title}</h3>
      {note && <span className="mr-[10px] ml-auto text-xs text-[#707070]">{note}</span>}
      <span className={`flex items-center text-[#606060] ${note ? "" : "ml-auto"}`}>
        <IconButton label={actionLabel} name={action} className="size-[22px]" />
        <span className="mx-[7px] h-4 w-px bg-[#e2e2e4]" />
        <IconButton label="Delete" name="trash" className="size-[22px]" />
      </span>
    </div>
  );
}

function DataPanel() {
  const deep = "pl-[56px]";
  return (
    <aside className="flex w-[344px] shrink-0 overflow-hidden rounded-lg border border-[#e4e4e7]">
      <div className="flex min-w-0 flex-1 flex-col pr-[5px] pl-1">
        <h2 className="h-8 pl-2 text-xs leading-8 font-semibold">Data</h2>
        <SectionTitle title="Maps" count={2} />
        <ul className="mt-px">
          <Row icon="map" name="Results map" sub="Query results" />
          <Row icon="gauge" name="Recent 311 requests" selected><UpdateButton /></Row>
          <li className="mt-1 flex h-[22px] items-center pl-[22px] text-[11px] font-medium text-[#606060]">Team</li>
          <li className="flex h-[22px] items-center gap-2 rounded bg-[#dddddf] pr-1 pl-[22px]">
            <Icon name="gauge" className="-mr-0.5 size-4 text-[#585858]" />
            <span className="min-w-0 flex-1 truncate text-[13px]">311 requests this month</span>
            <span className="w-[43px] shrink-0 truncate text-[11px] text-[#707070]">sam.patel</span>
            <UpdateButton />
          </li>
          <li className="flex h-[22px] items-center gap-2 rounded pr-1 pl-[22px]">
            <Icon name="gauge" className="-mr-0.5 size-4 text-[#585858]" />
            <span className="-mr-1 min-w-0 flex-1 truncate text-[13px]">Hearing radius, Oak Street</span>
            <span className="w-[41px] shrink-0 truncate text-[11px] text-[#707070]">kim.evans</span>
            <span className="h-4 shrink-0 rounded bg-[#ededef] px-[5px] text-[11px] leading-4 text-[#606060]">New</span>
          </li>
        </ul>
        <div className="mt-[10px]">
          <DetailCard icon="gauge" title="Recent 311 requests" action="share" actionLabel="Share" />
        </div>
        <div className="mt-2 border-t border-[#ececee]">
          <SectionTitle title="Databases" count={3} />
        </div>
        <ul className="min-h-0 flex-1 overflow-hidden">
          <li className="flex h-[22px] items-center rounded bg-[#dddddf] pr-2 pl-[6px]">
            <Icon name="down" className="size-3 text-[#606060]" />
            <Icon name="database" className="ml-1 size-4 text-[#585858]" />
            <span className="ml-1.5 text-[13px]">My database</span>
            <span className="ml-1.5 text-xs text-[#707070]">12 tables</span>
            <span className="ml-auto text-[10px] font-semibold tracking-wide text-[#606060]">OPEN</span>
          </li>
          <GroupRow name="Sewer" count="2" />
          <Row icon="layers" name="sewer_mains" sub="7" indent={deep} />
          <Row icon="layers" name="manholes" sub="7" indent={deep} />
          <GroupRow name="Storm" count="1" />
          <Row icon="layers" name="outfalls" sub="1" indent={deep} />
          <GroupRow name="Other" count="9" />
          {OTHER.map(([icon, name, count, tags]) => (
            <Row key={name} icon={icon} name={name} sub={count} indent={deep}>
              {tags.map((t) => (
                <Tag key={t}>{t}</Tag>
              ))}
            </Row>
          ))}
          <Row icon="database" name="County permits" />
          <Row icon="database" name="Hurricane response" />
        </ul>
        <DetailCard icon="database" title="My database" note="12 tables" action="pencil" actionLabel="Rename" />
        <div className="mt-2 border-t border-[#ececee] pb-1">
          <SectionTitle open={false} title="Add layer" />
        </div>
      </div>
      <nav aria-label="Views" className="flex w-[43px] flex-col items-center border-l border-[#ececee] pt-[5px] pb-[5px] text-[#505050]">
        <button type="button" aria-label="Chat" className="flex size-8 items-center justify-center rounded bg-[#e5e5e7]">
          <ChatIcon className="size-6" />
        </button>
        <button type="button" aria-label="Data" className="relative mt-3 flex size-8 items-center justify-center rounded bg-[#e5e5e7]">
          <Icon name="database" className="size-6" />
          <span className="absolute -right-0.5 bottom-0 flex h-4 w-[14px] items-center justify-center rounded-full bg-[#0069cc] text-[10px] text-white">3</span>
        </button>
        <IconButton label="More views" name="dots" className="mt-3 size-8" iconClass="size-6" />
        <IconButton label="Settings" name="gear" className="mt-auto size-8" iconClass="size-6" />
      </nav>
    </aside>
  );
}

/* ---------- Status bar ---------- */

const STATUS = [
  ["database", "My database"],
  ["briefcase", "Engineering"],
  ["compass", "EPSG:2236, US ft"],
  ["database", "DuckDB v1.5.6"],
  ["check", "Spatial"],
  ["grid", "12"],
  ["lock", "Sandboxed"],
];

function StatusBar() {
  return (
    <footer className="flex h-8 shrink-0 items-center gap-[15px] px-3 pt-0.5 text-xs text-[#606060]">
      {STATUS.map(([icon, label]) => (
        <button key={label} type="button" className="flex items-center gap-1">
          <Icon name={icon} className="size-[14px]" />
          {label}
        </button>
      ))}
      <button type="button" className="ml-auto flex items-center gap-1">
        <Icon name="sparkles" className="size-[14px]" />
        gpt-6.1-sol
      </button>
      <IconButton label="Tasks" name="list" className="size-[14px]" iconClass="size-[14px]" />
    </footer>
  );
}

function Handle() {
  return (
    <div role="separator" aria-orientation="vertical" className="flex w-1 shrink-0 flex-col items-center justify-center gap-[3px]">
      <span className="size-0.5 bg-[#a8a8aa]" />
      <span className="size-0.5 bg-[#a8a8aa]" />
      <span className="size-0.5 bg-[#a8a8aa]" />
    </div>
  );
}

export default function App() {
  return (
    <div className="flex h-screen flex-col overflow-hidden bg-[#fafafd] font-['Inter',sans-serif] text-[#202020] [font-feature-settings:'calt'_0]">
      <Header />
      <div className="flex min-h-0 flex-1 px-1">
        <ChatPanel />
        <Handle />
        <CenterPanel />
        <Handle />
        <DataPanel />
      </div>
      <StatusBar />
    </div>
  );
}
